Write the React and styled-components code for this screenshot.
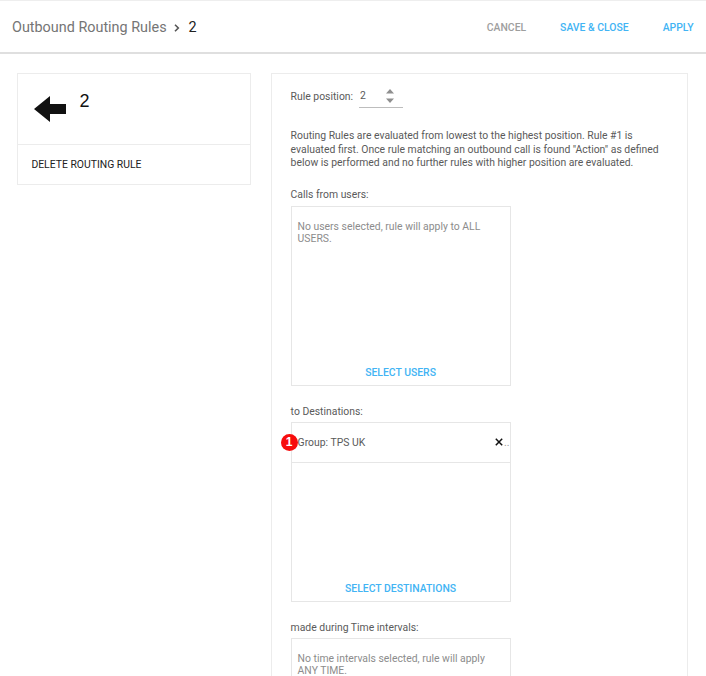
import React from 'react';
import styled, { createGlobalStyle } from 'styled-components';

const GlobalStyle = createGlobalStyle`
  html, body {
    margin: 0;
    padding: 0;
    height: 676px;
    overflow: hidden;
    background: #fff;
    font-family: Roboto, "Liberation Sans", sans-serif;
  }
`;

const Page = styled.div`
  width: 706px;
  height: 676px;
  overflow: hidden;
`;

const TopBar = styled.header`
  box-sizing: border-box;
  height: 54px;
  border-top: 1px solid #eeeeee;
  border-bottom: 2px solid #dfdfdf;
  display: flex;
  align-items: center;
  justify-content: space-between;
  padding: 1px 12px 0;
`;

const Crumbs = styled.div`
  display: flex;
  align-items: center;
  font-size: 14.4px;
  color: #757575;
`;

const CrumbArrow = styled.svg`
  width: 6px;
  height: 8px;
  margin: 1px 9px 0 7px;
`;

const CrumbCurrent = styled.span`
  color: #212121;
  font-size: 14.4px;
`;

const Actions = styled.div`
  display: flex;
  gap: 34px;
  margin-right: 0.5px;
`;

const ActionButton = styled.span`
  font-size: 10.4px;
  font-weight: 500;
  color: ${(props) => (props.$muted ? '#9e9e9e' : '#42b4f4')};
`;

const Content = styled.main`
  display: flex;
  align-items: flex-start;
  gap: 19.6px;
  padding: 19px 18px 0 17.4px;
`;

const SideCard = styled.aside`
  box-sizing: border-box;
  width: 234px;
  flex: none;
  border: 1px solid #ececec;
`;

const SideHead = styled.div`
  height: 70px;
  display: flex;
  align-items: flex-start;
  padding-left: 15px;
  border-bottom: 1px solid #ececec;
`;

const BackArrow = styled.svg`
  width: 34px;
  height: 28px;
  margin-top: 21px;
`;

const SideTitle = styled.span`
  margin: 16px 0 0 12px;
  font-family: "Liberation Sans", Arial, sans-serif;
  font-size: 18px;
  line-height: 22px;
  color: #111;
`;

const SideAction = styled.div`
  height: 39px;
  display: flex;
  align-items: center;
  padding-left: 13px;
  font-size: 10.4px;
  color: #212121;
`;

const MainCard = styled.section`
  box-sizing: border-box;
  width: 417.6px;
  height: 640px;
  border: 1px solid #ececec;
  padding: 14px 19px 14px 18.6px;
  font-size: 10.4px;
  color: #5a5a5a;
`;

const PositionRow = styled.div`
  display: flex;
  align-items: flex-start;
  height: 32px;
`;

const PositionLabel = styled.span`
  margin-top: 2px;
  margin-right: 6px;
`;

const PositionInput = styled.div`
  box-sizing: border-box;
  width: 44px;
  height: 20px;
  display: flex;
  justify-content: space-between;
  padding: 1px 8px 0 1px;
  border-bottom: 1px solid #bdbdbd;
`;

const Stepper = styled.svg`
  width: 10px;
  height: 14px;
`;

const Help = styled.p`
  margin: 9px 0 18px;
  width: 376px;
  line-height: 13.6px;
`;

const FieldLabel = styled.div`
  height: 13px;
  line-height: 13px;
  padding-top: ${(props) => (props.$nudge ? 1 : 0)}px;
  margin-bottom: ${(props) => (props.$nudge ? 4 : 5)}px;
`;

const ListBox = styled.div`
  box-sizing: border-box;
  width: 220px;
  height: 180px;
  border: 1px solid #e6e6e6;
  margin-bottom: 18px;
  display: flex;
  flex-direction: column;
`;

const Placeholder = styled.div`
  flex: 1;
  padding: 14px 6px 0;
  line-height: 12.5px;
  color: #8c8c8c;
`;

const SelectLink = styled.div`
  flex: 1;
  display: flex;
  align-items: flex-end;
  justify-content: center;
  padding-bottom: 6px;
  font-weight: 500;
  color: #42b4f4;
`;

const ListRow = styled.div`
  position: relative;
  box-sizing: border-box;
  flex: none;
  height: 40px;
  display: flex;
  align-items: center;
  justify-content: space-between;
  padding: 0 0 0 6px;
  border-bottom: 1px solid #e6e6e6;
`;

const Badge = styled.span`
  position: absolute;
  left: -11px;
  top: 11px;
  width: 17px;
  height: 17px;
  border-radius: 50%;
  background: #f70d0d;
  color: #fff;
  font-family: "Liberation Sans", Arial, sans-serif;
  font-size: 12px;
  font-weight: 700;
  line-height: 17px;
  text-align: center;
`;

const Remove = styled.span`
  display: flex;
  align-items: center;
  gap: 1px;
  color: #9a9a9a;
`;

const RemoveIcon = styled.svg`
  width: 8px;
  height: 8px;
`;

export default function App() {
  return (
    <Page>
      <GlobalStyle />
      <TopBar>
        <Crumbs>
          Outbound Routing Rules
          <CrumbArrow viewBox="0 0 6 8">
            <path d="M1 .8 4.3 4 1 7.2" fill="none" stroke="#555" strokeWidth="1.6" />
          </CrumbArrow>
          <CrumbCurrent>2</CrumbCurrent>
        </Crumbs>
        <Actions>
          <ActionButton $muted>CANCEL</ActionButton>
          <ActionButton>SAVE &amp; CLOSE</ActionButton>
          <ActionButton>APPLY</ActionButton>
        </Actions>
      </TopBar>
      <Content>
        <SideCard>
          <SideHead>
            <BackArrow viewBox="0 0 34 28">
              <path d="M1 14 17 1v8h16v10H17v8z" fill="#111" />
            </BackArrow>
            <SideTitle>2</SideTitle>
          </SideHead>
          <SideAction>DELETE ROUTING RULE</SideAction>
        </SideCard>
        <MainCard>
          <PositionRow>
            <PositionLabel>Rule position:</PositionLabel>
            <PositionInput>
              2
              <Stepper viewBox="0 0 10 14">
                <path d="M5 0 9 4.500H1zM5 14 1 9.500h8z" fill="#8f8f8f" />
              </Stepper>
            </PositionInput>
          </PositionRow>
          <Help>
            Routing Rules are evaluated from lowest to the highest position. Rule #1 is
            evaluated first. Once rule matching an outbound call is found "Action" as defined
            below is performed and no further rules with higher position are evaluated.
          </Help>
          <FieldLabel>Calls from users:</FieldLabel>
          <ListBox>
            <Placeholder>No users selected, rule will apply to ALL USERS.</Placeholder>
            <SelectLink>SELECT USERS</SelectLink>
          </ListBox>
          <FieldLabel $nudge>to Destinations:</FieldLabel>
          <ListBox>
            <ListRow>
              <Badge>1</Badge>
              Group: TPS UK
              <Remove>
                <RemoveIcon viewBox="0 0 8 8">
                  <path d="M.8.800 7.200 7.200M7.200.800.800 7.200" stroke="#111" strokeWidth="1.500" />
                </RemoveIcon>
                ..
              </Remove>
            </ListRow>
            <SelectLink>SELECT DESTINATIONS</SelectLink>
          </ListBox>
          <FieldLabel $nudge>made during Time intervals:</FieldLabel>
          <ListBox>
            <Placeholder>No time intervals selected, rule will apply ANY TIME.</Placeholder>
          </ListBox>
        </MainCard>
      </Content>
    </Page>
  );
}
